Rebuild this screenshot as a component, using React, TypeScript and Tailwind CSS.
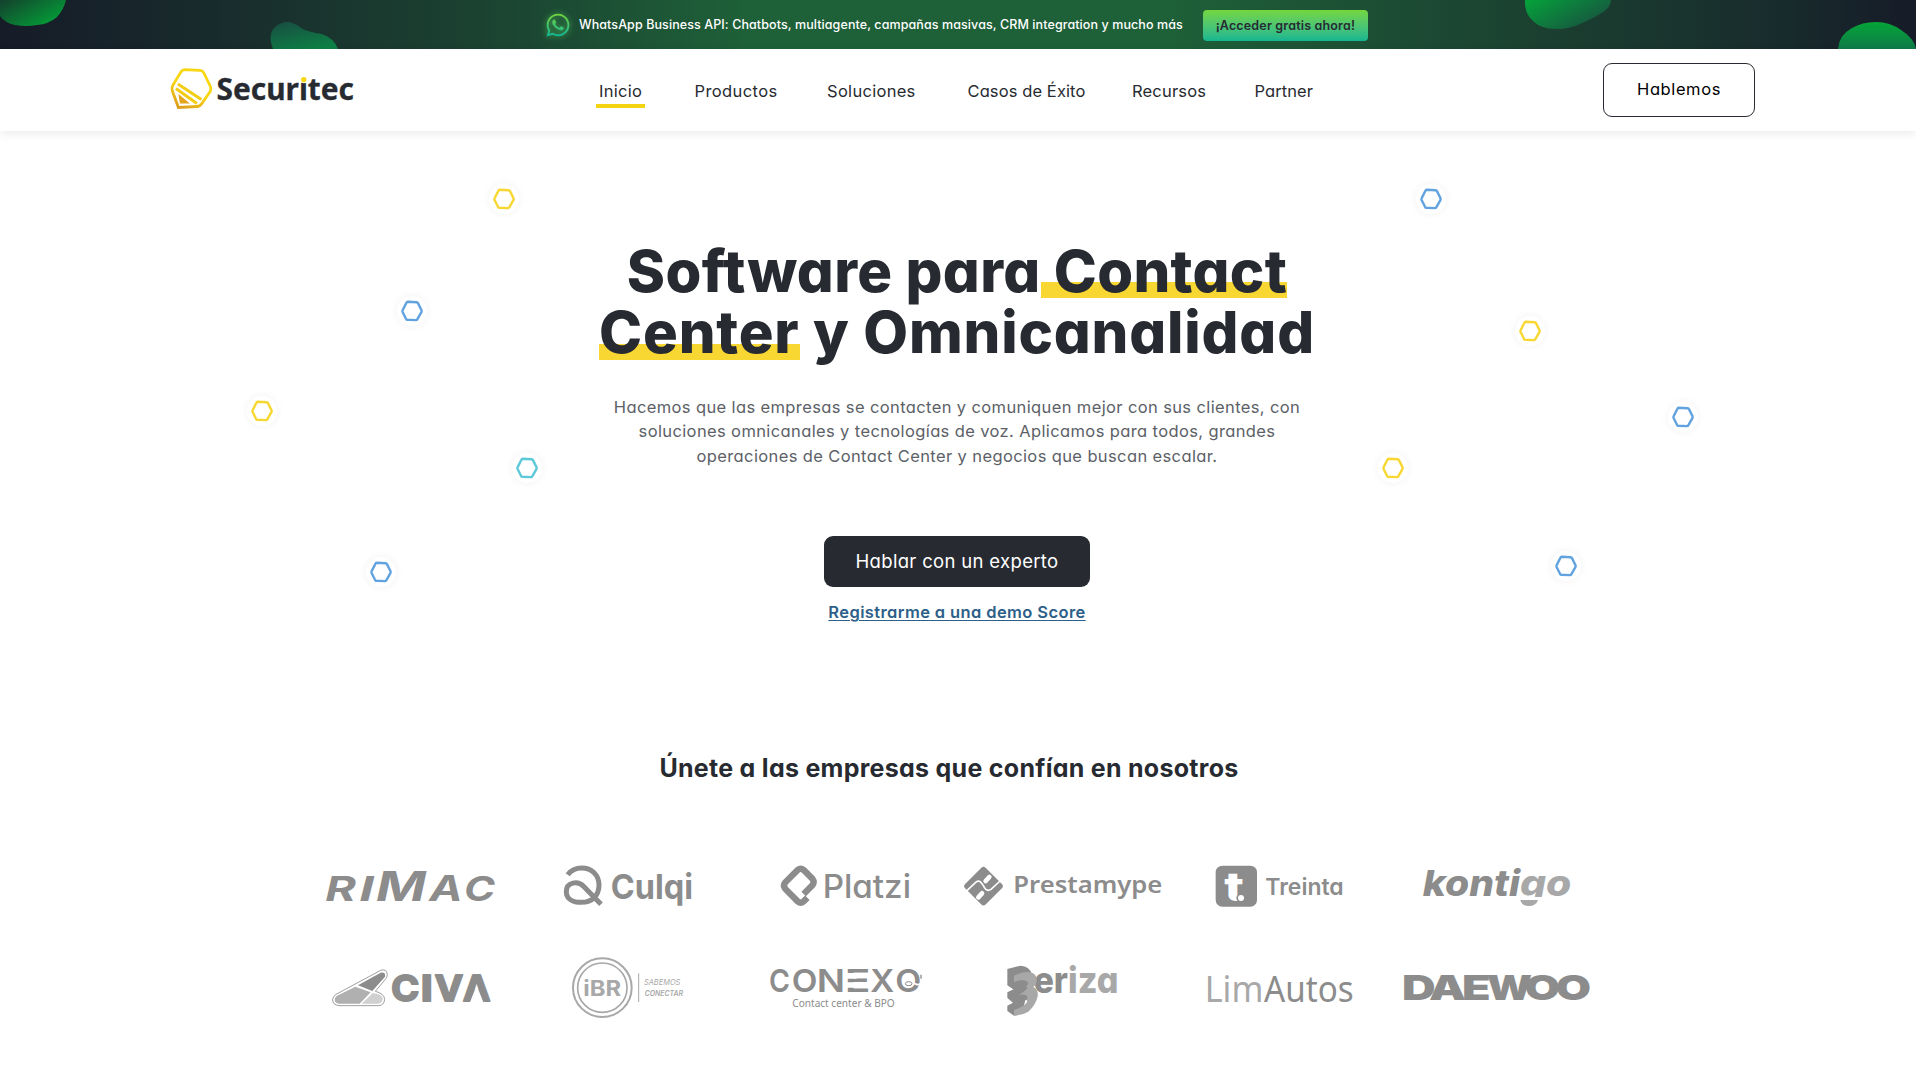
import type { ReactNode } from "react";
import { FaWhatsapp } from "react-icons/fa";

const G = "#8c8c8c";
const L = "#a8a8a8";

/* Text fitted between two x positions on a baseline. */
function Word(p: {
  x: number;
  to: number;
  y: number;
  size: number;
  weight?: number;
  fill?: string;
  font?: string;
  italic?: boolean;
  clip?: string;
  bold?: number;
  children: string;
}) {
  return (
    <text
      x={p.x}
      y={p.y}
      textLength={p.to - p.x}
      lengthAdjust="spacingAndGlyphs"
      fontSize={p.size}
      fontWeight={p.weight ?? 600}
      fill={p.fill ?? G}
      fontFamily={`${p.font ?? "Inter"}, sans-serif`}
      fontStyle={p.italic ? "italic" : "normal"}
      clipPath={p.clip}
      stroke={p.bold ? p.fill ?? G : "none"}
      strokeWidth={p.bold ?? 0}
      strokeLinejoin="round"
    >
      {p.children}
    </text>
  );
}

function Logo({ x, row, children }: { x: number; row: 0 | 1; children: ReactNode }) {
  return (
    <svg
      className="block h-[80px] w-[217px]"
      viewBox={`${x} ${row === 0 ? 0 : 300} 651 240`}
      fill="none"
    >
      {children}
    </svg>
  );
}

function Rimac() {
  return (
    <Logo x={-24} row={0}>
      <Word x={46} to={138} y={152} size={102} weight={700} italic>R</Word>
      <Word x={148} to={192} y={152} size={102} weight={700} italic>I</Word>
      <Word x={198} to={348} y={152} size={121} weight={700} italic>M</Word>
      <Word x={358} to={458} y={152} size={106} weight={700} italic>A</Word>
      <Word x={462} to={555} y={152} size={102} weight={700} italic>C</Word>
    </Logo>
  );
}

function Culqi() {
  return (
    <Logo x={627} row={0}>
      <path
        d="M873 163 L822 110 C803 90 769 97 769 125 C769 148 790 157 814 157 C848 157 867 135 867 105 C867 75 845 54 815 54 C797 54 783 61 773 74"
        stroke={G}
        strokeWidth="15"
      />
      <Word x={902} to={1149} y={147} size={104} weight={700}>Culqi</Word>
    </Logo>
  );
}

function Platzi() {
  return (
    <Logo x={78} row={0}>
      <path
        d="M292 143 L281 154 Q272 162 263 154 L226 117 Q218 107 226 97 L263 60 Q272 53 281 60 L307 86 Q315 97 307 106 L281 132"
        stroke={G}
        strokeWidth="19"
      />
      <Word x={338} to={603} y={143} size={97} weight={500}>Platzi</Word>
    </Logo>
  );
}

function Prestamype() {
  return (
    <Logo x={729} row={0}>
      <rect x={777} y={65} width={87} height={87} rx={9} fill={G} transform="rotate(45 820.5 108.5)" />
      <path d="M762 130 L797 97 Q808 89 814 99 Q821 107 823 112 Q831 126 843 118 L880 84" stroke="#fff" strokeWidth="5" />
      <path d="M827 93 L838 81 M805 142 L816 130" stroke="#fff" strokeWidth="14" strokeLinecap="round" />
      <Word x={910} to={1357} y={130} size={71} weight={600} font="Noto Sans">Prestamype</Word>
    </Logo>
  );
}

function Treinta() {
  return (
    <Logo x={-60} row={0}>
      <rect x={77} y={47} width={124} height={123} rx={20} fill={G} />
      <Word x={103} to={162} y={152} size={122} weight={800} fill="#fff">t</Word>
      <circle cx={153} cy={144} r={14} fill={G} />
      <circle cx={153} cy={144} r={9} fill="#fff" />
      <Word x={226} to={461} y={136} size={69} weight={600}>Treinta</Word>
    </Logo>
  );
}

function Kontigo() {
  return (
    <Logo x={591} row={0}>
      <clipPath id="kontigo-line">
        <rect x={590} y={0} width={660} height={141} />
      </clipPath>
      <Word x={698} to={990} y={137} size={108} weight={800} italic>konti</Word>
      <Word x={990} to={1144} y={137} size={108} weight={800} italic fill={L} clip="url(#kontigo-line)">go</Word>
      <path d="M991 150 H1044 Q1038 168 1016 168 Q995 168 991 150Z" fill={L} />
    </Logo>
  );
}

function Civa() {
  return (
    <Logo x={-24} row={1}>
      <path d="M78 433 L212 361 Q230 355 232 374 Q232 382 226 388 L196 424 Q222 430 224 448 Q222 467 205 467 L87 467 Q66 464 68 447 Q70 438 78 433Z" stroke={G} strokeWidth="2.5" />
      <path d="M144 406 L212 368 Q228 366 225 380 L187 423Z" fill={G} />
      <path d="M80 438 L136 410 L182 427 L149 461 L87 461 Q74 458 74 449 Q75 441 80 438Z" fill="#b0b0b0" />
      <path d="M188 429 L206 433 Q218 438 218 448 Q216 461 204 461 L155 461Z" fill="#d0d0d0" />
      <Word x={244} to={328} y={453} size={108} weight={700} bold={6}>C</Word>
      <Word x={332} to={368} y={453} size={108} weight={700} bold={6}>I</Word>
      <Word x={374} to={459} y={453} size={108} weight={700} bold={6}>V</Word>
      <Word x={459} to={541} y={453} size={108} weight={700} bold={6}>A</Word>
      <path d="M500 406 L521 460 H479Z" fill="#fff" />
    </Logo>
  );
}

function Ibr() {
  return (
    <Logo x={627} row={1}>
      <circle cx={877} cy={413} r={88} stroke={L} strokeWidth="6" />
      <circle cx={877} cy={413} r={74} stroke={L} strokeWidth="5" />
      <Word x={820} to={933} y={437} size={64} weight={700} fill={L}>iBR</Word>
      <path d="M986 370 V456" stroke={L} strokeWidth="3" />
      <Word x={1002} to={1111} y={406} size={24} weight={400} italic fill={L}>SABEMOS</Word>
      <Word x={1004} to={1119} y={437} size={23} weight={600} italic fill={L}>CONECTAR</Word>
    </Logo>
  );
}

function Conexo() {
  return (
    <Logo x={78} row={1}>
      <Word x={177} to={240} y={425} size={94} weight={600}>C</Word>
      <Word x={245} to={322} y={425} size={94} weight={600}>O</Word>
      <Word x={320} to={405} y={425} size={94} weight={600}>N</Word>
      <Word x={404} to={481} y={425} size={94} weight={600}>E</Word>
      <path d="M404 369 H440 V386 H404Z M404 397 H440 V413 H404Z" fill="#fff" />
      <Word x={481} to={553} y={425} size={94} weight={600}>X</Word>
      <Word x={556} to={634} y={425} size={94} weight={600}>O</Word>
      <path d="M608 394 Q618 410 636 400" stroke="#fff" strokeWidth="5" />
      <path d="M633 374 V386 M622 376 V384" stroke={G} strokeWidth="4" />
      <ellipse cx={596} cy={401} rx={10} ry={6} stroke={G} strokeWidth="3" fill="#fff" />
      <Word x={247} to={554} y={470} size={30} weight={400} font="Noto Sans">Contact center &amp; BPO</Word>
    </Logo>
  );
}

function Beriza() {
  return (
    <Logo x={729} row={1}>
      <Word x={971} to={1074} y={428} size={110} weight={800}>er</Word>
      <Word x={1074} to={1225} y={428} size={110} weight={800} fill={L}>iza</Word>
      <g transform="translate(870 315)">
        <path d="M22 42 L62 32 Q88 34 95 56 L70 160 L42 182 L22 168 V152 L42 142 L22 128 V112 L42 102 L22 90Z" fill={G} />
        <path
          d="M42 62 Q75 46 98 54 Q112 62 110 80 Q108 92 100 96 Q116 104 113 124 Q108 150 85 170 Q65 182 42 182 V165 Q80 152 82 138 Q75 128 42 145 L30 133 Q75 112 82 98 Q75 88 42 103 L26 94 Q34 84 42 82Z"
          fill={L}
        />
        <path d="M22 90 Q60 70 80 78 Q92 92 66 98 Q54 98 42 104Z M22 128 Q60 114 78 120 Q90 134 66 140 Q54 140 42 146Z" fill={G} />
      </g>
    </Logo>
  );
}

function LimAutos() {
  return (
    <Logo x={-60} row={1}>
      <Word x={44} to={220} y={456} size={108} weight={400} font="Noto Sans" fill={L}>Lim</Word>
      <Word x={222} to={491} y={456} size={108} weight={400} font="Noto Sans">Autos</Word>
    </Logo>
  );
}

function Daewoo() {
  return (
    <Logo x={591} row={1}>
      <Word x={636} to={737} y={451} size={104} weight={900}>D</Word>
      <Word x={717} to={828} y={451} size={104} weight={900}>A</Word>
      <Word x={816} to={902} y={451} size={104} weight={900}>E</Word>
      <Word x={890} to={1026} y={451} size={104} weight={900}>W</Word>
      <Word x={1004} to={1110} y={451} size={104} weight={900}>O</Word>
      <Word x={1097} to={1203} y={451} size={104} weight={900}>O</Word>
    </Logo>
  );
}

function Brand() {
  return (
    <svg className="block h-[44px] w-[190px]" viewBox="0 0 190 44" fill="none">
      <defs>
        <linearGradient id="brand" x1="0.7" y1="0" x2="0.2" y2="1">
          <stop offset="0.5" stopColor="#f8d612" />
          <stop offset="1" stopColor="#dd9d1c" />
        </linearGradient>
      </defs>
      <g transform="translate(1.4 0)">
        <path d="M15 3.6 L30.5 4.4 Q33.5 4.8 34.5 7 L41 20.5 Q42 23 40.8 25.5 L32.5 37.5 Q30.5 40.5 27.5 40.5 L9 41.5 L2.8 24.5 Q2 21.5 3.5 19.3 L11.5 6 Q12.8 3.8 15 3.6Z" stroke="url(#brand)" strokeWidth="2.8" />
        <path d="M8.5 18 L32 33.5 M6.5 22.5 L27.5 37.5" stroke="#f3cd15" strokeWidth="3" />
        <path d="M9 28 L20.5 37.5 L10.5 37.5Z" fill="#e2a51b" />
      </g>
      <Word x={48.5} to={186} y={34} size={29.5} weight={700} font="Noto Sans" fill="#272b31" bold={0.3}>Securitec</Word>
      <circle cx={136} cy={13.3} r={4} fill="#fff" />
      <circle cx={135.8} cy={13.8} r={2.7} fill="#f8d612" />
    </svg>
  );
}

function TopBar() {
  return (
    <div className="relative flex h-[49px] items-center overflow-hidden bg-[linear-gradient(90deg,#161b28_0%,#182b2c_11%,#1b4231_25%,#1e6038_39%,#1e6038_61%,#1b4231_79%,#182b2c_93%,#161b28_100%)] pl-[545px]">
      <svg className="absolute inset-0 h-[49px] w-full" viewBox="0 0 1916 49" preserveAspectRatio="none">
        <defs>
          <linearGradient id="b1" x1="0" y1="0" x2="1" y2="0.7">
            <stop stopColor="#14402d" />
            <stop offset="1" stopColor="#03a038" />
          </linearGradient>
          <linearGradient id="b2" x1="0.2" y1="0" x2="0.7" y2="1">
            <stop stopColor="#184f42" />
            <stop offset="1" stopColor="#0d8145" />
          </linearGradient>
          <linearGradient id="b3" x1="0" y1="0.1" x2="1" y2="0.7">
            <stop stopColor="#05a03b" />
            <stop offset="1" stopColor="#194f40" />
          </linearGradient>
          <linearGradient id="b4" x1="0.5" y1="0" x2="0.5" y2="1">
            <stop stopColor="#04a537" />
            <stop offset="1" stopColor="#0f7a49" />
          </linearGradient>
          <linearGradient id="wa" x1="0" y1="0" x2="0" y2="1">
            <stop stopColor="#78d63a" />
            <stop offset="1" stopColor="#0fb79c" />
          </linearGradient>
        </defs>
        <path d="M0 0 H66 Q64 9 57 17 Q49 24 37 25 Q26 27 15 25 Q5 23 0 16Z" fill="url(#b1)" />
        <path d="M273 49 Q268 37 273 29 Q280 21 290 22 Q296 24 301 28 Q308 32 322 34 Q334 38 338 49Z" fill="url(#b2)" />
        <path d="M1525 0 Q1524 13 1533 21 Q1541 29 1556 29 Q1570 29 1580 24 Q1594 18 1600 14 Q1611 8 1611 0Z" fill="url(#b3)" />
        <path d="M1838 49 Q1839 35 1852 28 Q1862 22 1876 22 Q1890 22 1901 30 Q1914 38 1916 49Z" fill="url(#b4)" />
      </svg>
      <FaWhatsapp size={26} fill="url(#wa)" className="relative mt-px drop-shadow-[0_0_3px_#4fbf5a]" />
      <p className="relative ml-[8px] mt-px whitespace-nowrap text-[12.5px] font-medium tracking-[0.095px] text-white">
        WhatsApp Business API: Chatbots, multiagente, campañas masivas, CRM integration y mucho más
      </p>
      <a className="relative ml-[20px] mt-[2px] flex h-[31px] w-[165px] items-center justify-center rounded-[4px] bg-gradient-to-b from-[#73d63c] to-[#10b691] pt-px text-[12.5px] font-semibold tracking-[0.17px] text-[#272b31]">
        ¡Acceder gratis ahora!
      </a>
    </div>
  );
}

function NavBar() {
  return (
    <header className="relative flex h-[82px] items-center bg-white pl-[168px] shadow-[0_3px_9px_rgba(0,0,0,0.08)]">
      <div className="-mt-[4px] w-[431px]">
        <Brand />
      </div>
      <nav className="flex whitespace-nowrap pt-[3px] text-[16.5px] text-[#272b31]">
        <a className="relative w-[95.5px] tracking-[0.3px]">
          Inicio
          <span className="absolute -bottom-[4px] -left-[3px] h-[4px] w-[49px] bg-[#f4d310]" />
        </a>
        <a className="w-[132.5px] tracking-[0.4px]">Productos</a>
        <a className="w-[140.5px] tracking-[0.3px]">Soluciones</a>
        <a className="w-[164.5px] tracking-[0.1px]">Casos de Éxito</a>
        <a className="w-[122.5px] tracking-[0.18px]">Recursos</a>
        <a className="tracking-[0.08px]">Partner</a>
      </nav>
      <a className="ml-auto mr-[161px] flex h-[54px] w-[152px] items-center justify-center rounded-[9px] border border-[#272b31] pb-[2px] text-[16.5px] tracking-[0.6px] text-black">
        Hablemos
      </a>
    </header>
  );
}

const Y = "#f8d733";
const B = "#62a3df";
const hexagons: [number, number, string][] = [
  [504, 198.5, Y],
  [412, 310.5, B],
  [262, 410.5, Y],
  [527, 467.5, "#5cc8d8"],
  [381, 571.5, B],
  [1431, 198.5, B],
  [1530, 330.5, Y],
  [1683, 416.5, B],
  [1393, 467.5, Y],
  [1566, 565.5, B],
];

function Hexagons() {
  return (
    <div className="pointer-events-none absolute left-0 top-0">
      {hexagons.map(([x, y, c]) => (
        <span
          key={`${x}-${y}`}
          className="absolute flex size-[30px] -translate-x-1/2 -translate-y-1/2 items-center justify-center rounded-full bg-white shadow-[0_0_8px_rgba(0,0,0,0.06)]"
          style={{ left: x, top: y }}
        >
          <svg width="24" height="24" viewBox="-12 -12 24 24">
            <path
              d="M-4.3 -9.2 L4.6 -8.7 Q5.6 -8.6 6.1 -7.6 L9.5 -0.8 Q9.9 0.2 9.4 1.1 L5.4 8.2 Q4.9 9.1 3.9 9.1 L-4.5 8.8 Q-5.5 8.7 -6 7.8 L-9.4 1 Q-9.8 0 -9.3 -0.9 L-5.6 -8.3 Q-5.2 -9.2 -4.3 -9.2Z"
              fill="none"
              stroke={c}
              strokeWidth="2.4"
            />
          </svg>
        </span>
      ))}
    </div>
  );
}

export default function App() {
  return (
    <div className="relative h-[1079px] w-[1916px] overflow-hidden bg-white font-[Inter,sans-serif] [font-feature-settings:'cv11']">
      <TopBar />
      <NavBar />
      <Hexagons />
      <main className="relative flex flex-col items-center pt-[110px]">
        <h1 className="flex flex-col items-center whitespace-pre pr-[2px] text-[58px] font-extrabold leading-[61.3px] text-[#272b31]">
          <span className="tracking-[0.35px]">
            Software para
            <span className="bg-[linear-gradient(to_bottom,transparent_46px,#f8d733_46px,#f8d733_62px,transparent_62px)]">
              {" Contact"}
            </span>
          </span>
          <span className="tracking-[0.82px]">
            <span className="bg-[linear-gradient(to_bottom,transparent_47px,#f8d733_47px,#f8d733_63px,transparent_63px)]">
              Center
            </span>
            {" y Omnicanalidad"}
          </span>
        </h1>
        <p className="mt-[31px] whitespace-nowrap pr-[2px] text-center text-[16.5px] leading-[24.5px] tracking-[0.38px] text-[#5c6167]">
          Hacemos que las empresas se contacten y comuniquen mejor con sus clientes, con
          <br />
          soluciones omnicanales y tecnologías de voz. Aplicamos para todos, grandes
          <br />
          operaciones de Contact Center y negocios que buscan escalar.
        </p>
        <a className="-ml-[2px] mt-[68px] flex h-[51px] w-[266px] items-center justify-center rounded-[9px] bg-[#272b31] text-[18.5px] tracking-[0.33px] text-white">
          Hablar con un experto
        </a>
        <a className="-ml-[2px] mt-[13px] text-[16.5px] font-semibold leading-[24px] tracking-[0.39px] text-[#2d5f88] underline decoration-1 underline-offset-2">
          Registrarme a una demo Score
        </a>
        <h2 className="mt-[126px] pr-[18px] text-[25px] font-bold leading-[36px] tracking-[0.28px] text-[#272b31]">
          Únete a las empresas que confían en nosotros
        </h2>
        <div className="mt-[64px] grid grid-cols-[repeat(6,217px)] gap-y-[20px] pr-[10px]">
          <Rimac />
          <Culqi />
          <Platzi />
          <Prestamype />
          <Treinta />
          <Kontigo />
          <Civa />
          <Ibr />
          <Conexo />
          <Beriza />
          <LimAutos />
          <Daewoo />
        </div>
      </main>
    </div>
  );
}
